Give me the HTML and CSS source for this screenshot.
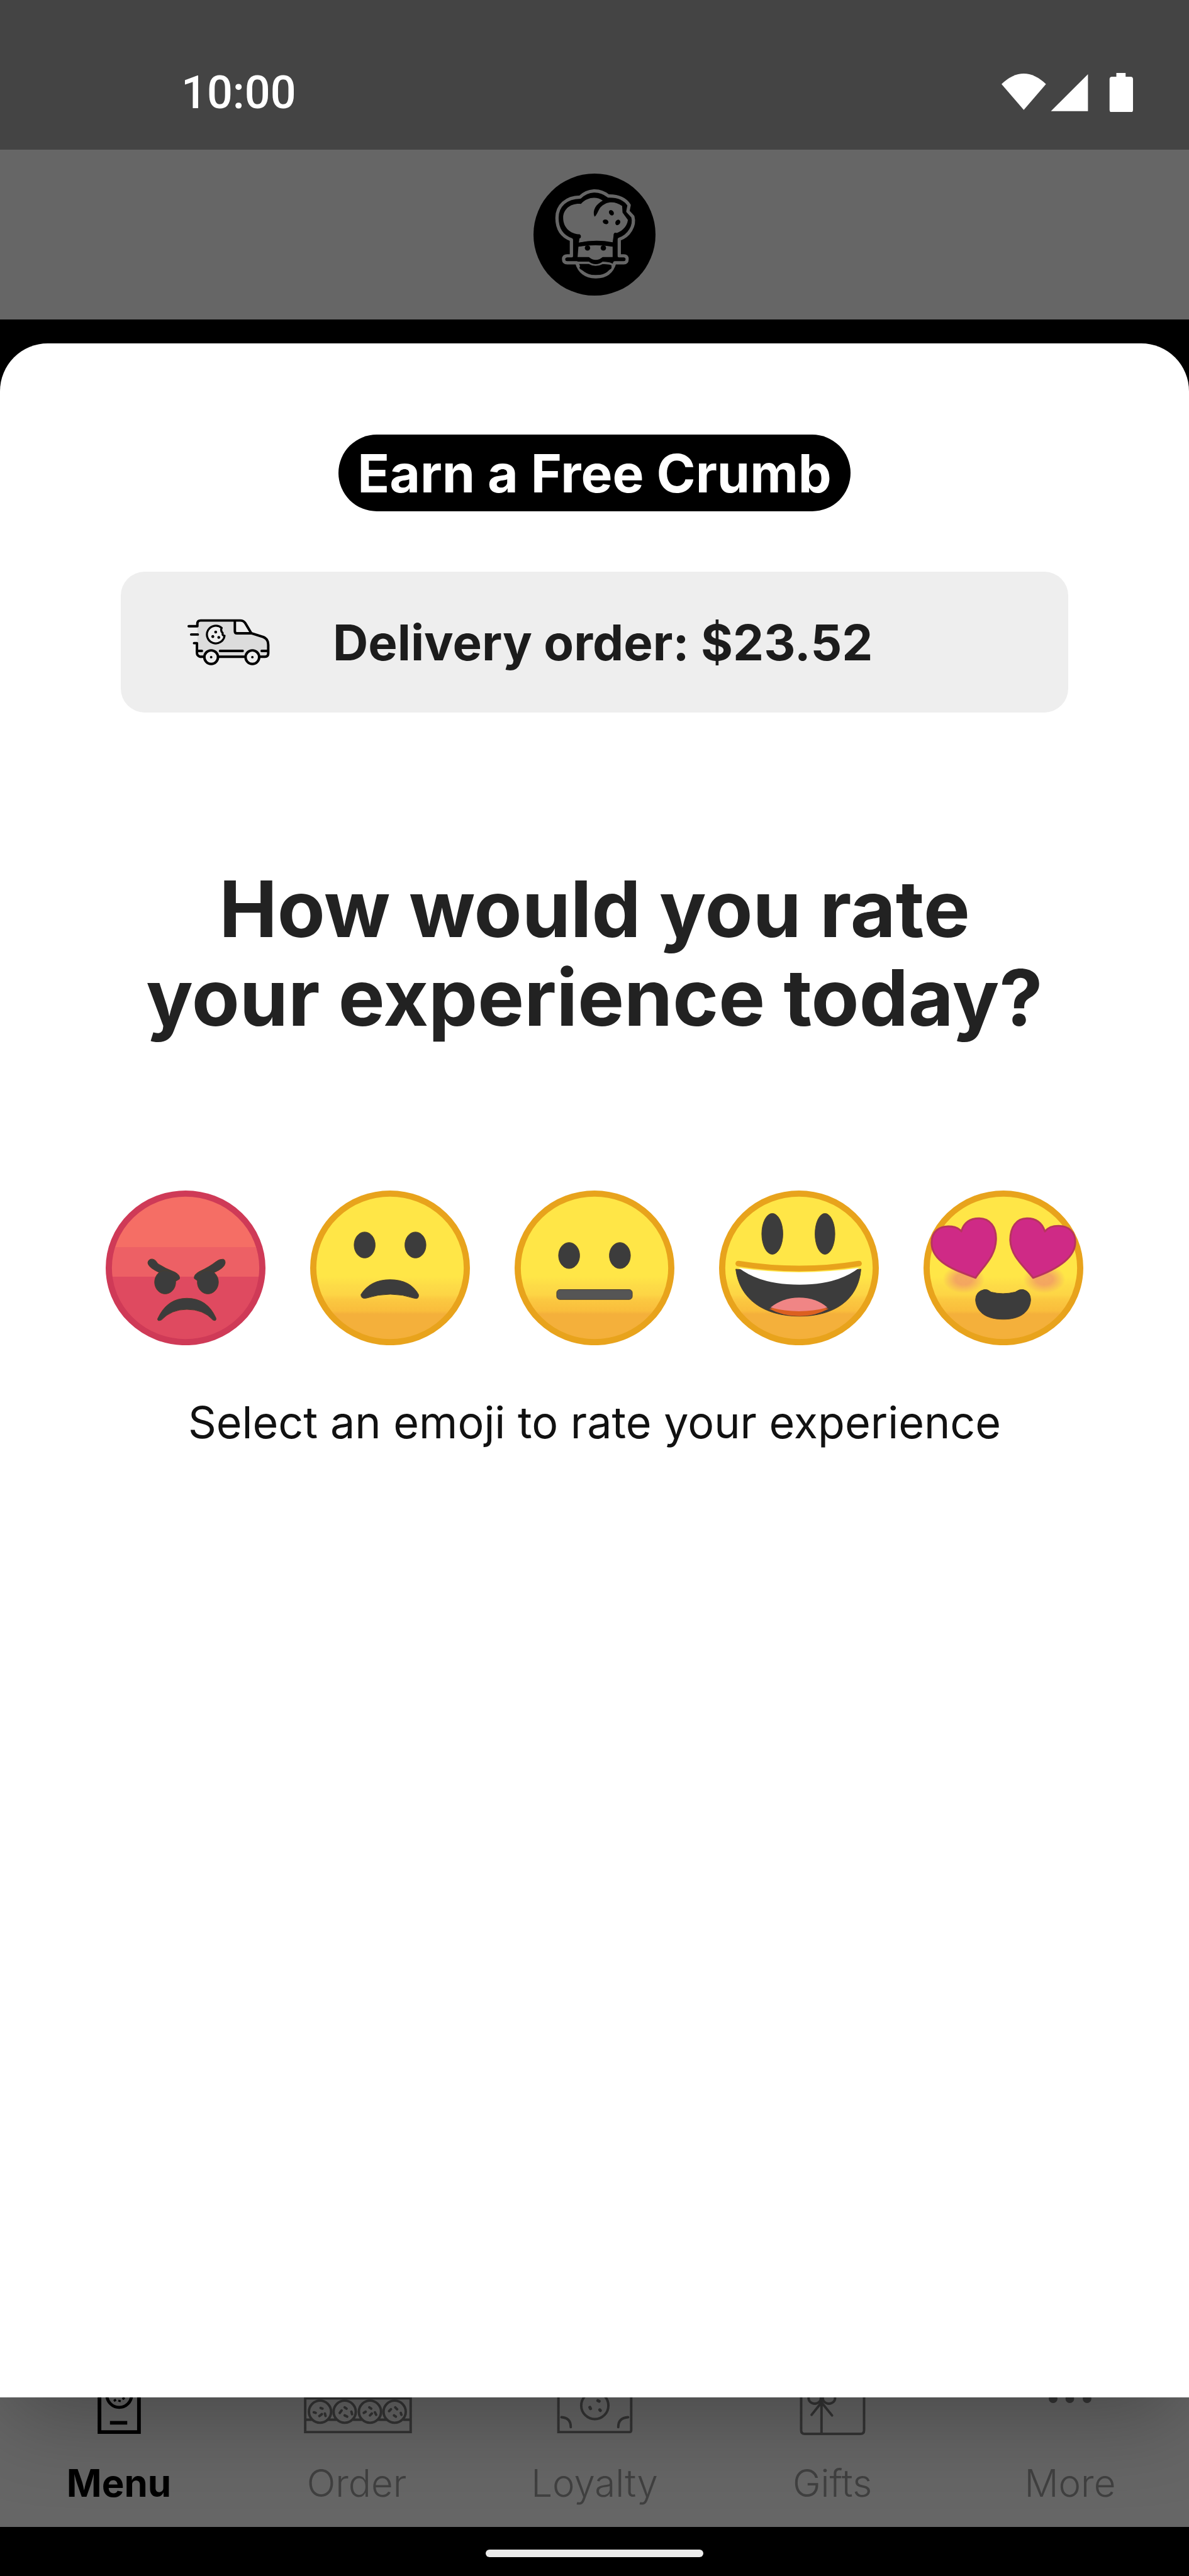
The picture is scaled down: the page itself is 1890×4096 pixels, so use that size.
FILE: index.html
```html
<!DOCTYPE html>
<html lang="en">
<head>
  <meta charset="UTF-8">
  <meta name="viewport" content="width=device-width, initial-scale=1.0">
  <title>Rate your experience</title>
  <link rel="stylesheet" href="styles.css">
</head>
<body>
<div class="app">

  <!-- Status bar -->
  <div class="status-bar">
    <span class="time">10:00</span>
    <svg class="status-icons" viewBox="0 0 214 64" aria-hidden="true">
      <path d="M0 18Q36 -16 72 18L36 60Z"/>
      <path d="M80 62L140 2V62Z"/>
      <path d="M186 0H201V6H209Q213 6 213 10V60Q213 64 209 64H179Q175 64 175 60V10Q175 6 179 6H186Z"/>
    </svg>
  </div>

  <!-- App header -->
  <header>
    <svg class="logo" viewBox="66 57 592 592" role="img" aria-label="Logo">
      <circle cx="362" cy="353" r="296" fill="#000"/>
      <g fill="none" stroke="#666" stroke-width="16" stroke-linejoin="round" stroke-linecap="round">
        <path fill="#000" d="M250 456V378C200 360 180 320 180 272C180 212 225 172 292 171C330 135 385 130 430 166C475 165 510 180 530 210L524 240L548 266C560 310 530 360 482 376V456H504Q520 456 520 472Q520 490 504 490H460Q440 560 366 558Q295 556 276 490H230Q212 490 212 472Q212 456 230 456Z"/>
        <path d="M282 498Q300 556 368 556Q434 556 452 506Q452 492 400 490Q366 508 336 490L282 490" stroke-width="12"/>
      </g>
      <!-- hat -->
      <path fill="#666" d="M292 352C240 350 210 315 210 272C210 230 245 200 296 204C325 172 370 165 402 188C370 205 350 235 362 266C372 262 378 240 390 222C420 190 460 190 496 214L498 246L524 282C520 318 490 342 456 350L450 390Q366 374 286 392Z"/>
      <path fill="#666" d="M284 412Q366 398 450 412V462H402Q368 490 334 462H280Z"/>
      <g fill="none" stroke="#000" stroke-linecap="round" stroke-width="17">
        <path d="M270 366V464"/>
        <path d="M464 352V464"/>
        <path d="M286 402Q366 384 452 402"/>
      </g>
      <circle cx="286" cy="362" r="10"/>
      <path fill="none" stroke="#000" stroke-width="17" stroke-linecap="round" d="M230 473H334Q368 502 402 473H504M298 513Q365 562 436 513"/>
      <g fill="#000">
        <ellipse cx="444" cy="247" rx="11" ry="14" transform="rotate(-35 444 247)"/>
        <ellipse cx="416" cy="291" rx="14" ry="11" transform="rotate(20 416 291)"/>
        <ellipse cx="475" cy="294" rx="11" ry="14" transform="rotate(35 475 294)"/>
        <circle cx="328" cy="418" r="13"/>
        <circle cx="405" cy="418" r="13"/>
      </g>
    </svg>
  </header>

  <!-- Rating sheet -->
  <main class="sheet">
    <button class="badge" type="button">Earn a Free Crumb</button>

    <div class="order-card">
      <svg class="van" viewBox="40 60 400 227" aria-hidden="true">
        <path fill="#dcdcdc" d="M88 94V84Q88 68 104 68H300Q314 68 322 78L350 128L410 148Q432 156 432 184V228Q432 244 416 244H104Q88 244 88 228Z"/>
        <path fill="#eee" d="M270 70H304L348 130H280Q270 130 270 120Z"/>
        <g fill="none" stroke="#000" stroke-width="12" stroke-linecap="round" stroke-linejoin="round">
          <path d="M46 96H88V84Q88 68 104 68H296Q312 68 320 80L350 130L408 148Q432 158 432 186V228Q432 244 416 244H390M320 244H190M120 244H102Q86 240 86 226V178H72"/>
          <path d="M58 136H90M270 70V120Q270 130 280 130H350M86 216H110M198 216H308M400 216H430"/>
          <path fill="#eee" stroke-width="10" d="M206 104A43 43 0 1 0 220 142Q208 142 211 129Q199 118 206 104Z"/>
          <circle cx="155" cy="246" r="33" fill="#eee"/>
          <circle cx="355" cy="246" r="33" fill="#eee"/>
        </g>
        <circle cx="155" cy="246" r="6"/><circle cx="355" cy="246" r="6"/>
        <circle cx="177" cy="124" r="7"/><circle cx="163" cy="146" r="7"/><circle cx="192" cy="150" r="7"/>
      </svg>
      <span>Delivery order: $23.52</span>
    </div>

    <h1>How would you rate<br>your experience today?</h1>

    <div class="ratings">
      <button type="button" aria-label="Angry">
        <svg viewBox="0 0 258 250">
          <defs>
            <linearGradient id="red" x2="0" y2="1">
              <stop offset=".36" stop-color="#f56e65"/><stop offset=".36" stop-color="#ed6065"/>
              <stop offset=".56" stop-color="#ed6065"/><stop offset=".56" stop-color="#df4a60"/>
            </linearGradient>
            <linearGradient id="yellow" x2="0" y2="1">
              <stop offset=".56" stop-color="#ffe647"/><stop offset=".62" stop-color="#fddb47"/>
              <stop offset=".68" stop-color="#fdd545"/><stop offset=".71" stop-color="#fbc941"/>
              <stop offset=".79" stop-color="#f9bd3c"/><stop offset=".81" stop-color="#f4b03b"/>
            </linearGradient>
          </defs>
          <ellipse cx="129" cy="125" rx="124" ry="120" fill="url(#red)" stroke="#cf3a57" stroke-width="10"/>
          <g class="ink">
            <path d="M72 111Q79 109 84 118Q96 126 112 132Q121 137 119 143L112 147L90 134Q69 125 68 117Q68 113 72 111Z"/>
            <ellipse cx="96" cy="148" rx="17" ry="19"/>
            <path d="M188 111Q193 110 193 117Q192 125 176 132L150 147L143 142Q142 136 151 131Q168 123 178 115Q183 111 188 111Z"/>
            <ellipse cx="165" cy="148" rx="17" ry="19"/>
            <path d="M84 207Q99 174 131 174Q164 174 178 206Q179 212 173 209Q158 192 131 192Q106 192 90 209Q83 212 84 207Z"/>
          </g>
        </svg>
      </button>
      <button type="button" aria-label="Sad">
        <svg viewBox="0 0 258 250">
          <ellipse class="face" cx="129" cy="125" rx="124" ry="120"/>
          <g class="ink">
            <ellipse cx="88" cy="88" rx="17" ry="21"/>
            <ellipse cx="170" cy="88" rx="17" ry="21"/>
            <path d="M82 168Q97 144 129 144Q162 144 175 168Q176 176 168 174Q130 161 90 174Q82 175 82 168Z"/>
          </g>
        </svg>
      </button>
      <button type="button" aria-label="Neutral">
        <svg viewBox="0 0 258 250">
          <ellipse class="face" cx="129" cy="125" rx="124" ry="120"/>
          <g class="ink">
            <ellipse cx="88" cy="105" rx="17" ry="21"/>
            <ellipse cx="170" cy="105" rx="17" ry="21"/>
            <rect x="68" y="160" width="122" height="16" rx="5" fill="#555"/>
          </g>
        </svg>
      </button>
      <button type="button" aria-label="Happy">
        <svg viewBox="0 0 258 250">
          <ellipse class="face" cx="129" cy="125" rx="124" ry="120"/>
          <g class="ink">
            <ellipse cx="86" cy="70" rx="17" ry="33"/>
            <ellipse cx="171" cy="70" rx="16" ry="33"/>
            <path d="M27 127Q129 140 229 127C225 178 184 203 130 203C73 203 33 176 27 127Z"/>
          </g>
          <path fill="#fff" d="M32 125Q129 139 226 125Q192 152 130 152Q66 152 32 125Z"/>
          <path fill="none" stroke="#e8a31c" stroke-width="9" stroke-linecap="round" d="M31 118Q130 134 226 118"/>
          <path fill="#dc6020" d="M81 191Q129 178 177 191Q155 203 130 203Q103 203 81 191Z"/>
          <path fill="#f08585" d="M83 189Q103 173 129 173Q157 173 175 189Q129 201 83 189Z"/>
        </svg>
      </button>
      <button type="button" aria-label="Love it">
        <svg viewBox="0 0 258 250">
          <defs>
            <radialGradient id="blush">
              <stop offset=".4" stop-color="#f09468" stop-opacity=".75"/><stop offset="1" stop-color="#f09468" stop-opacity="0"/>
            </radialGradient>
          </defs>
          <ellipse class="face" cx="129" cy="125" rx="124" ry="120"/>
          <ellipse cx="65" cy="143" rx="34" ry="23" fill="url(#blush)"/>
          <ellipse cx="195" cy="143" rx="34" ry="23" fill="url(#blush)"/>
          <g fill="#cf2a86" stroke="#b8355d" stroke-width="3" stroke-linejoin="round">
            <path d="M84 141C50 129 13 115 13 84C13 66 26 58 40 58Q55 58 61 66Q67 45 90 45C107 45 118 59 117 80C116 106 98 121 84 141Z"/>
            <path d="M177 141C211 129 245 111 245 83C245 66 233 57 218 57Q203 57 196 66Q189 45 167 45C150 45 140 59 140 80C141 106 161 121 177 141Z"/>
          </g>
          <path class="ink" d="M98 160Q103 159 109 164Q128 169 148 164Q155 159 161 160Q173 163 173 177C171 200 151 208 129 208C106 208 86 200 84 177Q84 163 98 160Z"/>
        </svg>
      </button>
    </div>

    <p class="hint">Select an emoji to rate your experience</p>
  </main>

  <!-- Bottom navigation, partly under the sheet -->
  <nav>
    <a class="current" href="#menu">
      <svg viewBox="0 0 184 102" aria-hidden="true">
        <path stroke-width="6" d="M60 0V97H124V0M77 82H105"/>
        <circle cx="92" cy="37" r="20" stroke-width="5"/>
        <path stroke-width="4" d="M84 44l2 3M93 45l-1 3M98 41l2 3"/>
      </svg>
      Menu
    </a>
    <a href="#order">
      <svg viewBox="0 0 184 102" aria-hidden="true">
        <path d="M8 0V97H179V0M8 42H179M8 77H18M45 77H58M86 77H99M127 77H140M168 77H179"/>
        <circle cx="32" cy="64" r="18"/><circle cx="72" cy="64" r="18"/><circle cx="113" cy="64" r="18"/><circle cx="153" cy="64" r="18"/>
        <path d="M22 65l3 1M33 58l3 1M31 71l4-3M40 67l1 4M64 66l3-4M72 57l3 2M72 70l4 2M83 64l1 4M103 66l3-2M112 57l3 2M113 70l3-3M121 65l2 4M144 63l3-3M154 57l3 3M152 70l3 2M163 66l1 3"/>
      </svg>
      Order
    </a>
    <a href="#loyalty">
      <svg viewBox="0 0 184 102" aria-hidden="true">
        <path d="M33 0V97H148Q151 97 151 94V0M38 73Q53 74 53 89M146 73Q130 74 130 89"/>
        <circle cx="92" cy="54" r="22"/>
        <path stroke-width="5" d="M84 57l1 2M97 46l2 1M100 61l1 1"/>
      </svg>
      Loyalty
    </a>
    <a href="#gifts">
      <svg viewBox="0 0 184 102" aria-hidden="true">
        <path d="M41 0V94Q41 100 47 100H137Q143 100 143 94V0M74 30V100M74 49L58 69M74 49L91 70"/>
        <ellipse cx="63" cy="42" rx="10" ry="9"/><ellipse cx="86" cy="42" rx="10" ry="9"/>
      </svg>
      Gifts
    </a>
    <a href="#more">
      <svg viewBox="0 0 184 102" aria-hidden="true">
        <g class="dots"><circle cx="64" cy="43" r="7"/><circle cx="91" cy="43" r="7"/><circle cx="119" cy="43" r="7"/></g>
      </svg>
      More
    </a>
  </nav>

  <div class="home-bar"><span></span></div>
</div>
</body>
</html>
```

FILE: styles.css
```css
* { box-sizing: border-box; }

body {
  margin: 0;
  background: #000;
  font-family: Inter, "Open Sans", sans-serif;
  color: #222;
}

.app {
  display: flex;
  flex-direction: column;
  min-height: 100vh;
}

button {
  padding: 0;
  border: none;
  background: none;
  font-family: inherit;
  cursor: pointer;
}

svg { display: block; }

/* Status bar */
.status-bar {
  position: relative;
  z-index: 2;
  display: flex;
  justify-content: space-between;
  align-items: center;
  height: 238px;
  padding: 56px 88px 0 288px;
  background: #444;
}

.time {
  color: #fff;
  font-family: Roboto, sans-serif;
  font-size: 72px;
  font-weight: 500;
}

.status-icons {
  width: 210px;
  fill: #fff;
}

header {
  position: relative;
  z-index: 2;
  display: flex;
  justify-content: center;
  align-items: center;
  height: 270px;
  background: #666;
}

.logo { width: 194px; }

/* Sheet */
.sheet {
  position: relative;
  z-index: 1;
  flex: 1;
  display: flex;
  flex-direction: column;
  align-items: center;
  margin-top: 38px;
  padding: 145px 192px 0;
  background: #fff;
  border-radius: 76px 76px 0 0;
  box-shadow: 0 40px 140px -10px rgba(0, 0, 0, 0.3);
}

.badge {
  height: 122px;
  padding: 0 30px;
  border-radius: 61px;
  background: #000;
  color: #fff;
  font-size: 84px;
  font-weight: 700;
  white-space: nowrap;
}

.order-card {
  display: flex;
  align-items: center;
  gap: 100px;
  align-self: stretch;
  height: 224px;
  margin-top: 96px;
  padding-left: 106px;
  border-radius: 38px;
  background: #eee;
  color: #1c1c1c;
  font-size: 78px;
  font-weight: 700;
  white-space: nowrap;
}

.van { width: 131px; }

h1 {
  margin: 242px 0 0;
  font-size: 124px;
  font-weight: 700;
  line-height: 141px;
  text-align: center;
  white-space: nowrap;
}

.ratings {
  display: flex;
  gap: 71px;
  margin-top: 236px;
}

.ratings svg { width: 254px; }

.face {
  fill: url(#yellow);
  stroke: #e8a31c;
  stroke-width: 10px;
}

.ink {
  fill: #3c3c3c;
  stroke: #4a3d2c;
  stroke-width: 1px;
}

.hint {
  margin: 79px 0 0;
  color: #111;
  font-size: 70px;
  line-height: 88px;
  white-space: nowrap;
}

/* Bottom navigation */
nav {
  display: grid;
  grid-template-columns: repeat(5, 1fr);
  margin-top: -40px;
  padding-bottom: 34px;
  background: #666;
}

nav a {
  display: flex;
  flex-direction: column;
  align-items: center;
  gap: 40px;
  color: #404040;
  font-size: 60px;
  font-weight: 300;
  line-height: 72px;
  text-decoration: none;
}

nav svg {
  width: 181px;
  height: 100px;
  fill: none;
  stroke: #343434;
  stroke-width: 4px;
  stroke-linecap: round;
}

nav .current {
  color: #000;
  font-weight: 700;
}

nav .current svg {
  stroke: #000;
  stroke-linecap: butt;
}

.dots {
  fill: #343434;
  stroke: none;
}

.home-bar {
  position: relative;
  z-index: 2;
  display: flex;
  justify-content: center;
  height: 78px;
  padding-top: 36px;
  background: #000;
}

.home-bar span {
  width: 346px;
  height: 12px;
  border-radius: 6px;
  background: #ececec;
}
```
